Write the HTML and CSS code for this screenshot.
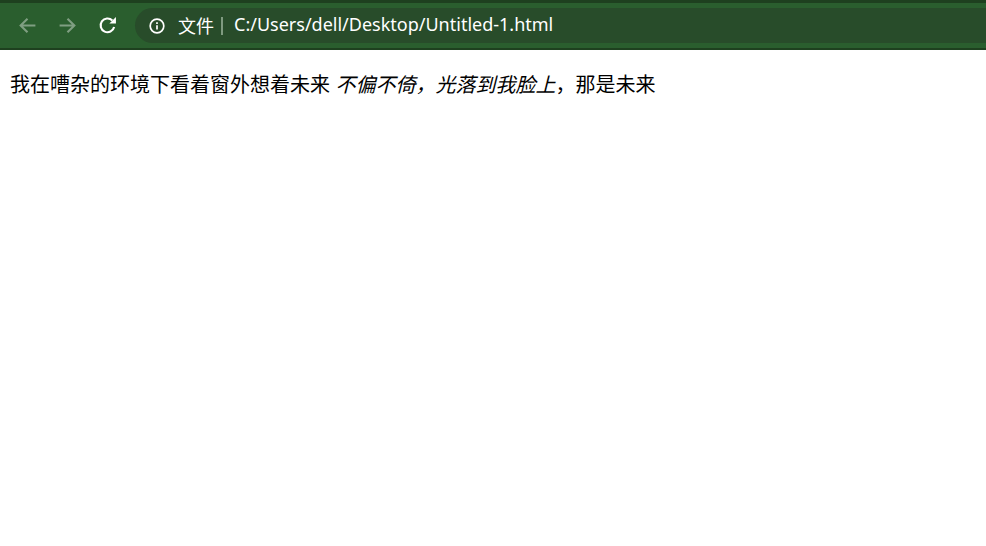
FILE: index.html
```html
<!DOCTYPE html>
<html lang="zh-CN">
<head>
  <meta charset="UTF-8">
  <title>Untitled-1</title>
  <link rel="stylesheet" href="styles.css">
</head>
<body>
  <div class="tab-strip"></div>
  <div class="toolbar">
    <svg class="nav-icon dim" viewBox="0 0 18 18"><path d="M16.500 9H2.500M9 2.500 2.500 9 9 15.500"/></svg>
    <svg class="nav-icon dim" viewBox="0 0 18 18"><path d="M1.500 9h14M9 2.500 15.500 9 9 15.500"/></svg>
    <svg class="nav-icon" viewBox="0 0 18 18"><path d="M15.300 10.500A6.500 6.500 0 1 1 13.600 4.300"/><path class="solid" d="M10.800 7.200h6.200V1z"/></svg>
    <div class="omnibox">
      <svg class="info-icon" viewBox="0 0 16 16"><circle cx="8" cy="8" r="6.800"/><path d="M8 7.200v4.300"/><path d="M8 4.200v1.700"/></svg>
      <span class="scheme">文件</span>
      <span class="divider"></span>
      <span class="url">C:/Users/dell/Desktop/Untitled-1.html</span>
    </div>
  </div>
  <p class="content">我在嘈杂的环境下看着窗外想着未来 <em>不偏不倚，光落到我脸上</em>，那是未来</p>
</body>
</html>
```

FILE: styles.css
```css
body {
  font-family: "Liberation Sans", "Noto Sans CJK SC", sans-serif;
  background-color: #fff;
  margin: 0;
  padding: 0;
}

.tab-strip {
  height: 3px;
  background-color: #1e401f;
}

.toolbar {
  height: 47px;
  box-sizing: border-box;
  padding: 5px 0 5px 18px;
  display: flex;
  align-items: center;
  background-color: #2a5e2e;
  border-bottom: 2px solid #1e401f;
}

.nav-icon {
  width: 19px;
  height: 19px;
  margin-right: 21px;
  fill: none;
  stroke: #fff;
  stroke-width: 2;
  flex-shrink: 0;
}

.nav-icon.dim {
  opacity: 0.4;
}

.nav-icon .solid {
  fill: #fff;
  stroke: none;
}

.omnibox {
  flex: 1;
  height: 35px;
  margin-left: -3px;
  padding-left: 14px;
  display: flex;
  align-items: center;
  background-color: #284c2a;
  border-radius: 18px 0 0 18px;
  color: #fff;
  font-family: "Noto Sans", "Noto Sans CJK SC", sans-serif;
  font-size: 18px;
  line-height: 24px;
}

.info-icon {
  width: 16px;
  height: 16px;
  margin-right: 13px;
  fill: none;
  stroke: #fff;
  stroke-width: 1.700;
}

.scheme {
  font-family: "Noto Sans CJK SC", sans-serif;
  margin-bottom: 2px;
}

.divider {
  width: 2px;
  height: 18px;
  margin: 0 11px 0 7px;
  background-color: #7f9a80;
}

.url {
  margin-bottom: 3px;
}

.content {
  margin: 0;
  padding: 23px 10px 0;
  font-size: 20px;
  line-height: 24px;
  color: #000;
}
```
